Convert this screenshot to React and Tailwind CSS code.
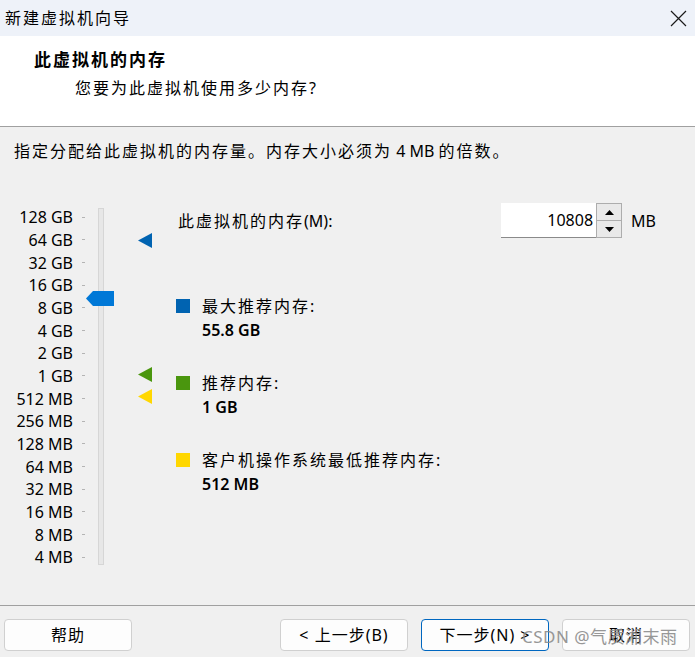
import React from "react";

const labels = [
  "128 GB", "64 GB", "32 GB", "16 GB", "8 GB", "4 GB", "2 GB", "1 GB",
  "512 MB", "256 MB", "128 MB", "64 MB", "32 MB", "16 MB", "8 MB", "4 MB",
];

function Btn({ children, primary, className = "" }) {
  return (
    <div
      className={
        "w-[128px] h-[32px] flex items-center justify-center rounded-[4px] bg-[#fdfdfd] text-[16px] tracking-[1px] text-black border " +
        (primary ? "border-[#0067c0]" : "border-[#d0d0d0]") +
        " " +
        className
      }
    >
      {children}
    </div>
  );
}

export default function App() {
  return (
    <div className="relative w-[695px] h-[657px] bg-[#f0f0f0] flex flex-col overflow-hidden font-['Noto_Sans','Noto_Sans_CJK_SC',sans-serif] text-black">
      {/* Title bar */}
      <div className="h-[36px] bg-[#eef2f9] flex items-center justify-between pl-[5px] pr-[8px]">
        <span className="text-[16px] tracking-[2px] leading-[24px]">新建虚拟机向导</span>
        <svg width="17" height="17" viewBox="0 0 17 17" className="text-[#1a1a1a]">
          <path d="M1 1 L16 16 M16 1 L1 16" stroke="currentColor" strokeWidth="1.2" fill="none" />
        </svg>
      </div>

      {/* Header */}
      <div className="h-[91px] bg-white border-b border-[#a0a0a0] pl-[34px] pt-[12px]">
        <div className="text-[17px] font-bold tracking-[2px] leading-[24px]">此虚拟机的内存</div>
        <div className="mt-[4px] pl-[41px] text-[16px] tracking-[2px] leading-[24px]">您要为此虚拟机使用多少内存?</div>
      </div>

      {/* Body */}
      <div className="flex-1 flex flex-col">
        <div className="pt-[12px] pl-[14px] text-[16px] tracking-[2px] leading-[24px]">
          指定分配给此虚拟机的内存量。内存大小必须为<span className="tracking-normal"> 4 MB </span>的倍数。
        </div>

        <div className="flex flex-row">
          {/* Slider widget */}
          <div className="relative w-[176px] pt-[43px] flex flex-row">
            <div className="flex flex-col">
              {labels.map((l) => (
                <div key={l} className="h-[22.67px] flex items-center">
                  <span className="w-[73px] text-right text-[16px] leading-[20px]">{l}</span>
                  <span className="ml-[9px] w-[3px] h-px bg-[#b4b4b4]" />
                </div>
              ))}
            </div>
            <div className="ml-[13px] mt-[2px] w-[6px] h-[357px] bg-[#e7e7e7] border border-[#d6d6d6]" />

            {/* thumb */}
            <div className="absolute left-[86px] top-[128px] w-[28px] h-[15px] bg-[#0078d7] [clip-path:polygon(25%_0,100%_0,100%_100%,25%_100%,0_50%)]" />
            {/* markers */}
            <div className="absolute left-[138px] top-[70px] w-[14px] h-[15px] bg-[#0063b1] [clip-path:polygon(100%_0,100%_100%,0_50%)]" />
            <div className="absolute left-[138px] top-[204px] w-[14px] h-[15px] bg-[#4a960e] [clip-path:polygon(100%_0,100%_100%,0_50%)]" />
            <div className="absolute left-[138px] top-[226px] w-[14px] h-[15px] bg-[#ffd700] [clip-path:polygon(100%_0,100%_100%,0_50%)]" />
          </div>

          {/* Content */}
          <div className="flex-1 pt-[40px] pr-[39px] flex flex-col">
            <div className="h-[35px] flex items-center">
              <span className="ml-[2px] text-[16px] tracking-[2px] leading-[24px]">
                此虚拟机的内存<span className="tracking-normal">(M):</span>
              </span>
              <div className="ml-auto flex flex-row h-[35px]">
                <div className="w-[95px] h-[35px] bg-white border-b border-[#8a8a8a] flex items-center justify-end pr-[3px] text-[16px]">
                  10808
                </div>
                <div className="w-[26px] h-[35px] flex flex-col border border-[#adadad] bg-[#e9e9e9]">
                  <div className="flex-1 flex items-center justify-center border-b border-[#adadad]">
                    <svg width="9" height="5" viewBox="0 0 9 5"><path d="M0 5 L4.5 0 L9 5 Z" fill="#000" /></svg>
                  </div>
                  <div className="flex-1 flex items-center justify-center">
                    <svg width="9" height="5" viewBox="0 0 9 5"><path d="M0 0 L9 0 L4.5 5 Z" fill="#000" /></svg>
                  </div>
                </div>
              </div>
              <span className="ml-[9px] text-[16px] leading-[24px]">MB</span>
            </div>

            <div className="mt-[56px] flex flex-col gap-[29px]">
              <div className="flex flex-row">
                <div className="mt-[5px] w-[14px] h-[14px] bg-[#0063b1]" />
                <div className="ml-[12px] flex flex-col">
                  <span className="text-[16px] tracking-[2px] leading-[24px]">最大推荐内存:</span>
                  <span className="text-[16px] font-semibold leading-[24px]">55.8 GB</span>
                </div>
              </div>
              <div className="flex flex-row">
                <div className="mt-[5px] w-[14px] h-[14px] bg-[#4a960e]" />
                <div className="ml-[12px] flex flex-col">
                  <span className="text-[16px] tracking-[2px] leading-[24px]">推荐内存:</span>
                  <span className="text-[16px] font-semibold leading-[24px]">1 GB</span>
                </div>
              </div>
              <div className="flex flex-row">
                <div className="mt-[5px] w-[14px] h-[14px] bg-[#ffd700]" />
                <div className="ml-[12px] flex flex-col">
                  <span className="text-[16px] tracking-[2px] leading-[24px]">客户机操作系统最低推荐内存:</span>
                  <span className="text-[16px] font-semibold leading-[24px]">512 MB</span>
                </div>
              </div>
            </div>
          </div>
        </div>
      </div>

      {/* Footer */}
      <div className="h-[52px] border-t border-[#a0a0a0] flex flex-row items-start pt-[13px] pl-[4px] pr-[5px]">
        <Btn>帮助</Btn>
        <div className="ml-auto flex flex-row gap-[13px]">
          <Btn>&lt; 上一步(B)</Btn>
          <Btn primary>下一步(N) &gt;</Btn>
          <Btn>取消</Btn>
        </div>
      </div>

      {/* Watermark */}
      <div className="absolute left-[522px] top-[625px] text-[17px] leading-[24px] tracking-[0.5px] text-[#8c8c8c] opacity-90 pointer-events-none">
        CSDN @气质湘末雨
      </div>
    </div>
  );
}
